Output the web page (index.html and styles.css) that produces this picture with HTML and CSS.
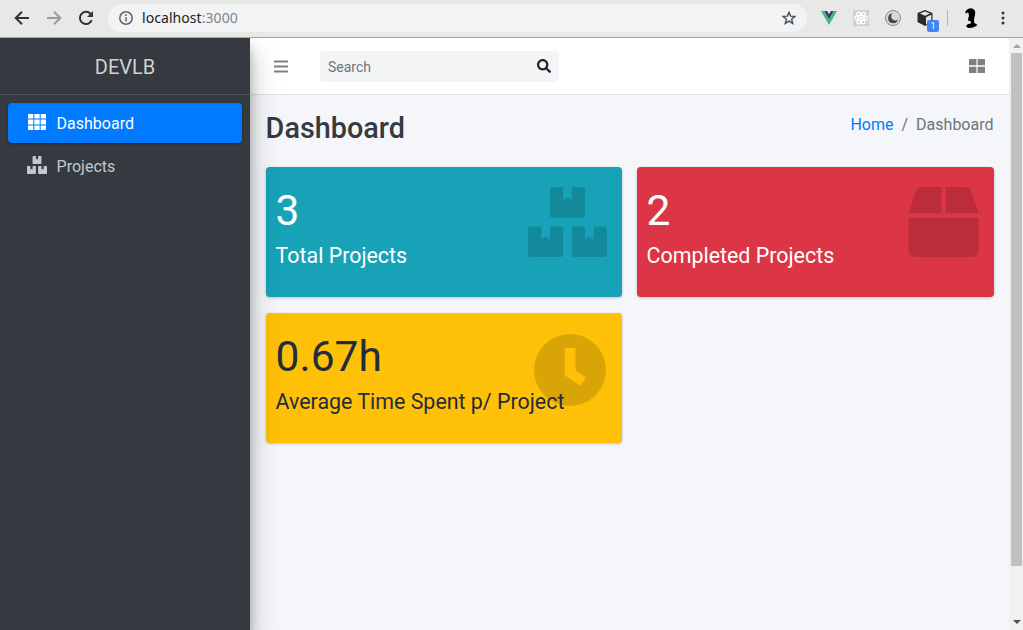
FILE: index.html
```html
<!DOCTYPE html>
<html lang="en">
<head>
<meta charset="utf-8">
<title>DEVLB</title>
<link rel="stylesheet" href="styles.css">
</head>
<body>
<svg class="defs" aria-hidden="true">
  <symbol id="boxes" viewBox="0 0 576 512"><path d="M560 288h-80v96l-32-21.3-32 21.3v-96h-80c-8.8 0-16 7.2-16 16v192c0 8.8 7.2 16 16 16h224c8.8 0 16-7.2 16-16V304c0-8.8-7.2-16-16-16zm-384-64h224c8.8 0 16-7.2 16-16V16c0-8.8-7.2-16-16-16h-80v96l-32-21.3L256 96V0h-80c-8.8 0-16 7.2-16 16v192c0 8.8 7.2 16 16 16zm64 64h-80v96l-32-21.3L96 384v-96H16c-8.8 0-16 7.2-16 16v192c0 8.8 7.2 16 16 16h224c8.8 0 16-7.2 16-16V304c0-8.8-7.2-16-16-16z"/></symbol>
</svg>
<header class="browser">
  <svg class="nav-btn" viewBox="0 0 16 16"><path d="M15 8H2M8 1.700L1.700 8L8 14.300"/></svg>
  <svg class="nav-btn disabled" viewBox="0 0 16 16"><path d="M1 8H14M8 1.700L14.300 8L8 14.300"/></svg>
  <svg class="nav-btn" viewBox="0 0 16 16"><path d="M13.700 10.200A6.100 6.100 0 1 1 12.500 3.800L14 5.300"/><path class="fill" d="M15 1V7H9z"/></svg>
  <div class="address">
    <svg class="info" viewBox="0 0 14 14"><circle cx="7" cy="7" r="6.200"/><path d="M7 6.200V10.400M7 3.300V4.900"/></svg>
    <span class="url">localhost<span class="port">:3000</span></span>
    <svg class="star" viewBox="0 0 14 14"><path d="M7 1.200L8.600 5.100L12.900 5.400L9.600 8.200L10.700 12.400L7 10.100L3.300 12.400L4.400 8.200L1.100 5.400L5.400 5.100z"/></svg>
  </div>
  <div class="extensions">
    <svg class="ext" viewBox="0 0 16 16"><path fill="#41b883" d="M0 1H3.300L8 9.300L12.700 1H16L8 15z"/><path fill="#35405e" d="M3.300 1H6.200L8 4.200L9.800 1H12.700L8 9.300z"/></svg>
    <svg class="ext" viewBox="0 0 16 16"><path fill="#d0d0ce" d="M0 0H16V16H0z"/><g fill="none" stroke="#fff" stroke-width="1.200"><ellipse cx="8" cy="8" rx="6.500" ry="2.700"/><ellipse cx="8" cy="8" rx="6.500" ry="2.700" transform="rotate(60 8 8)"/><ellipse cx="8" cy="8" rx="6.500" ry="2.700" transform="rotate(120 8 8)"/></g><circle cx="8" cy="8" r="1.500" fill="#fff"/></svg>
    <svg class="ext" viewBox="0 0 16 16"><circle cx="8" cy="8" r="7.500" fill="#d8d8d8" stroke="#8c8c8c"/><path fill="#444" d="M7.500 3.200A5 5 0 1 0 13 9.500A3.900 3.900 0 0 1 7.500 3.200z"/></svg>
    <div class="ext-box">
      <svg viewBox="0 0 16 16"><path fill="#2b2b2b" d="M8 0L15.500 3V12L8 16L.5 12V3z"/><path fill="#e8e8e6" d="M8 1.500L13 3.500L8 5.800L3 3.500z"/><path fill="#e8e8e6" d="M9 7.200L14.300 4.800V11.500L9 14.500z"/></svg>
      <span class="badge">1</span>
    </div>
    <i class="divider"></i>
    <svg class="profile" viewBox="0 0 16 20"><path d="M5 1Q10-1 12 3Q12.500 6 11.500 9Q10.500 12 11.500 15L14.500 17Q11 20 6 20Q4 20 3 18L5 16L8 15.500L7.500 13H5.500L5 11L6 8L5.500 5L4 4.500L3 6L2.300 4Q3 2 5 1z"/></svg>
    <svg class="dots" viewBox="0 0 4 14"><circle cx="2" cy="2" r="1.500"/><circle cx="2" cy="7" r="1.500"/><circle cx="2" cy="12" r="1.500"/></svg>
  </div>
</header>
<div class="page">
  <aside class="sidebar">
    <div class="brand">DEVLB</div>
    <nav class="menu">
      <a class="item active"><svg class="th" viewBox="0 0 18 16"><path d="M.8 0H4.700Q5.300 0 5.300.6V4.400H0V.8Q0 0 .8 0zM6.300 0H11.700V4.400H6.300zM12.700 0H17.200Q18 0 18 .8V4.400H12.700zM0 5.600H5.300V10.400H0zM6.300 5.600H11.700V10.400H6.300zM12.700 5.600H18V10.400H12.700zM0 11.600H5.300V16H.8Q0 16 0 15.200zM6.300 11.600H11.700V16H6.300zM12.700 11.600H18V15.200Q18 16 17.200 16H12.700z"/></svg><span>Dashboard</span></a>
      <a class="item"><svg class="bx"><use href="#boxes"/></svg><span>Projects</span></a>
    </nav>
  </aside>
  <main class="main">
    <div class="topbar">
      <svg class="bars" viewBox="0 0 14 13"><path d="M0 1.500H14M0 6.500H14M0 11.500H14"/></svg>
      <div class="search"><span>Search</span><svg viewBox="0 0 512 512"><path d="M505 442.700L405.300 343c-4.500-4.500-10.600-7-17-7H372c27.600-35.300 44-79.700 44-128C416 93.100 322.900 0 208 0S0 93.100 0 208s93.100 208 208 208c48.300 0 92.700-16.400 128-44v16.300c0 6.400 2.500 12.500 7 17l99.700 99.700c9.400 9.400 24.600 9.400 33.900 0l28.300-28.300c9.400-9.400 9.400-24.600.1-34zM208 336c-70.700 0-128-57.200-128-128 0-70.700 57.200-128 128-128 70.700 0 128 57.200 128 128 0 70.700-57.200 128-128 128z"/></svg></div>
      <svg class="grid-icon" viewBox="0 0 16 14"><path d="M0 .6Q0 0 .6 0H7.400V6.300H0zM8.600 0H15.400Q16 0 16 .6V6.300H8.600zM0 7.700H7.400V14H.6Q0 14 0 13.400zM8.600 7.700H16V13.400Q16 14 15.400 14H8.600z"/></svg>
    </div>
    <div class="heading">
      <h1>Dashboard</h1>
      <div class="crumbs"><a>Home</a><span class="sep">/</span><span>Dashboard</span></div>
    </div>
    <section class="cards">
      <div class="card teal"><svg class="art art-boxes"><use href="#boxes"/></svg><h3>3</h3><p>Total Projects</p></div>
      <div class="card red"><svg class="art art-box" viewBox="0 0 512 512"><path d="M509.500 184.600L458.900 32.800C452.400 13.200 434.100 0 413.400 0H272v192h238.700c-.4-2.500-.4-5-1.200-7.400zM240 0H98.600c-20.700 0-39 13.200-45.500 32.800L2.500 184.600c-.8 2.400-.8 4.900-1.200 7.400H240V0zM0 224v240c0 26.500 21.500 48 48 48h416c26.500 0 48-21.500 48-48V224H0z"/></svg><h3>2</h3><p>Completed Projects</p></div>
      <div class="card yellow"><svg class="art art-clock" viewBox="0 0 72 72"><path fill-rule="evenodd" d="M36 0A36 36 0 1 0 36 72A36 36 0 1 0 36 0zM32 14H40.300Q41.500 14 41.500 15.200V36L51.300 42.900Q52 43.500 51.400 44.400L46.700 50.700Q46 51.600 45 51L31.500 41.800Q30.700 41.300 30.700 40.300V15.200Q30.700 14 32 14z"/></svg><h3>0.67h</h3><p>Average Time Spent p/ Project</p></div>
    </section>
  </main>
  <div class="scrollbar">
    <svg class="up" viewBox="0 0 8 4"><path d="M0 4L4 0L8 4z"/></svg>
    <i class="thumb"></i>
    <svg class="down" viewBox="0 0 8 4"><path d="M0 0L4 4L8 0z"/></svg>
  </div>
</div>
</body>
</html>
```
FILE: styles.css
```css
* { box-sizing: border-box; }
body { margin: 0; width: 1023px; height: 630px; overflow: hidden; display: flex; flex-direction: column; font-family: Roboto, sans-serif; font-size: 16px; color: #212529; }
svg { display: block; flex: none; }
h1, h3, p { margin: 0; font-weight: 400; }
.defs { display: none; }

.browser { height: 38px; flex: none; display: flex; align-items: center; padding: 0 0 2px 14px; background: #e8e8e6; border-bottom: 1px solid #a5a5a4; }
.nav-btn { width: 16px; height: 16px; margin-right: 16px; fill: none; stroke: #303438; stroke-width: 2; }
.nav-btn .fill { fill: #303438; stroke: none; }
.nav-btn.disabled { stroke: #9b9d9d; }
.nav-btn:nth-child(3) { margin-right: 14px; }
.address { width: 699px; height: 28px; border-radius: 14px; background: #f1f3f4; display: flex; align-items: center; padding: 0 11px; }
.info { width: 14px; height: 14px; fill: none; stroke: #5f6368; stroke-width: 1.500; }
.url { flex: 1; margin-left: 9px; font: 14px/20px "Noto Sans", sans-serif; letter-spacing: .06px; color: #202124; }
.port { color: #80868b; }
.star { width: 14px; height: 14px; fill: none; stroke: #4b4f54; stroke-width: 1.400; }
.extensions { display: flex; align-items: center; margin-left: 14px; }
.ext { width: 16px; height: 16px; margin-right: 16px; }
.ext-box { position: relative; width: 16px; height: 16px; margin-right: 14px; }
.ext-box svg { width: 16px; height: 16px; }
.badge { position: absolute; left: 10px; top: 10px; width: 12px; height: 12px; border-radius: 2px; background: #4285f4; color: #fff; font-size: 9px; line-height: 12px; text-align: center; }
.divider { width: 1px; height: 16px; background: #b2b3b2; margin-right: 15px; }
.profile { width: 16px; height: 20px; margin-right: 22px; }
.dots { width: 4px; height: 14px; fill: #303438; }

.page { flex: 1; display: flex; min-height: 0; overflow: hidden; }
.sidebar { width: 250px; position: relative; z-index: 2; background: #343a40; box-shadow: 0 14px 28px rgba(0,0,0,.25), 0 10px 10px rgba(0,0,0,.22); }
.brand { height: 57px; border-bottom: 1px solid #4b545c; font-size: 20px; line-height: 58px; text-align: center; color: #d0d2d3; }
.menu { padding: 8px; display: flex; flex-direction: column; gap: 3px; }
.item { height: 40px; display: flex; align-items: center; padding-left: 19px; border-radius: 4px; color: #c2c7d0; fill: currentColor; }
.item.active { background: #007bff; color: #fff; box-shadow: 0 1px 3px rgba(0,0,0,.12), 0 1px 2px rgba(0,0,0,.24); }
.th { width: 18px; height: 16px; margin: -2px 10.600px 0 1px; }
.bx { width: 20px; height: 18px; margin: -2px 9.600px 0 0; }
.main { flex: 1; min-width: 0; background: #f4f6f9; }
.topbar { height: 57px; background: #fff; border-bottom: 1px solid #dee2e6; display: flex; align-items: center; padding: 0 24px; }
.bars { width: 14px; height: 13px; stroke: #808080; stroke-width: 2; }
.search { margin-left: 32px; width: 239px; height: 31px; border-radius: 4px; background: #f2f4f6; display: flex; align-items: center; justify-content: space-between; padding: 0 8px; font-size: 14px; color: #6c757d; }
.search span { padding-top: 2px; }
.search svg { width: 14px; height: 14px; fill: #212529; }
.grid-icon { width: 16px; height: 14px; margin-left: auto; fill: #808080; }
.heading { display: flex; justify-content: space-between; padding: 15px 15.500px 0 15.600px; height: 72px; }
.heading h1 { font-size: 28.800px; line-height: 36px; font-weight: 500; color: #343a40; }
.crumbs { display: flex; gap: 8px; line-height: 30px; color: #6c757d; }
.crumbs a { color: #007bff; }
.cards { display: grid; grid-template-columns: 356px 357px; gap: 16px 15px; padding-left: 16px; }
.card { position: relative; height: 130px; border-radius: 4px; padding: 19px 9.600px; color: #fff; box-shadow: 0 0 1px rgba(0,0,0,.125), 0 1px 3px rgba(0,0,0,.2); }
.card h3 { position: relative; font-size: 42.500px; line-height: 50px; }
.card p { position: relative; font-size: 21.400px; line-height: 32px; margin-top: 4px; }
.teal { background: #17a2b8; }
.red { background: #dc3545; }
.yellow { background: #ffc107; color: #1f2d3d; }
.art { position: absolute; right: 15px; top: 20px; fill: rgba(0,0,0,.15); }
.art-boxes { width: 79px; height: 70px; }
.art-box { width: 71px; height: 70px; }
.art-clock { width: 72px; height: 72px; right: 16px; top: 21px; }
.scrollbar { width: 14px; background: #f1f1f1; display: flex; flex-direction: column; align-items: center; padding: 6px 1px 6px 2px; }
.up, .down { width: 8px; height: 4px; }
.up { fill: #a3a3a3; margin-bottom: 5px; }
.down { fill: #505050; margin-top: auto; }
.thumb { width: 11px; height: 513px; background: #c1c1c1; }
```
